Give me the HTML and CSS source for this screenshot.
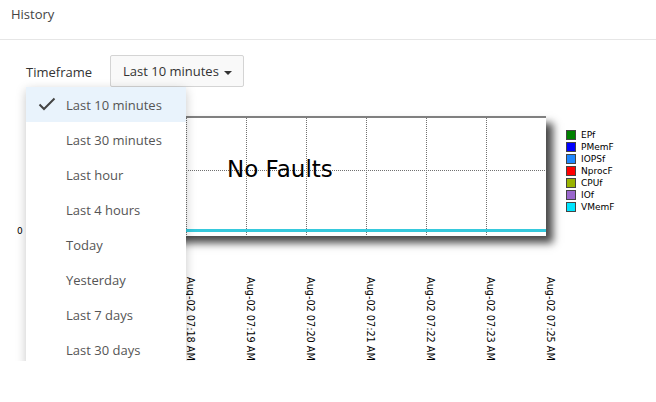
FILE: index.html
```html
<!DOCTYPE html>
<html>
<head>
<meta charset="utf-8">
<link rel="stylesheet" href="styles.css">
</head>
<body>
<div class="header">History</div>
<div class="toolbar">
  <span class="tf-label">Timeframe</span>
  <button class="tf-btn">Last 10 minutes <span class="caret"></span></button>
  <ul class="menu">
    <li class="item active"><svg class="check" width="18" height="14" viewBox="0 0 18 14"><path d="M1.5 7.5 L6 12 L16.5 1.5" fill="none" stroke="#444" stroke-width="2"/></svg>Last 10 minutes</li>
    <li class="item">Last 30 minutes</li>
    <li class="item">Last hour</li>
    <li class="item">Last 4 hours</li>
    <li class="item">Today</li>
    <li class="item">Yesterday</li>
    <li class="item">Last 7 days</li>
    <li class="item">Last 30 days</li>
  </ul>
</div>
<div class="chart">
  <div class="yaxis"><span class="ytick">0</span></div>
  <div class="plot-col">
    <div class="plot">
      <svg width="516" height="120" viewBox="0 0 516 120">
        <rect x="0" y="0" width="516" height="2" fill="#808080"/>
        <g stroke="#707070" stroke-width="1" stroke-dasharray="1 1">
          <line x1="0" y1="54.5" x2="516" y2="54.5"/>
          <line x1="36.5" y1="2" x2="36.5" y2="120"/>
          <line x1="96.5" y1="2" x2="96.5" y2="120"/>
          <line x1="156.5" y1="2" x2="156.5" y2="120"/>
          <line x1="216.5" y1="2" x2="216.5" y2="120"/>
          <line x1="276.5" y1="2" x2="276.5" y2="120"/>
          <line x1="336.5" y1="2" x2="336.5" y2="120"/>
          <line x1="396.5" y1="2" x2="396.5" y2="120"/>
          <line x1="456.5" y1="2" x2="456.5" y2="120"/>
        </g>
        <rect x="0" y="113" width="516" height="3" fill="#36c9dc"/>
      </svg>
      <div class="nofaults">No Faults</div>
    </div>
    <div class="xlabels">
      <span class="xl">Aug-02 07:18 AM</span>
      <span class="xl">Aug-02 07:19 AM</span>
      <span class="xl">Aug-02 07:20 AM</span>
      <span class="xl">Aug-02 07:21 AM</span>
      <span class="xl">Aug-02 07:22 AM</span>
      <span class="xl">Aug-02 07:23 AM</span>
      <span class="xl">Aug-02 07:25 AM</span>
    </div>
  </div>
  <ul class="legend">
    <li><span class="sw sw-epf"></span>EPf</li>
    <li><span class="sw sw-pmem"></span>PMemF</li>
    <li><span class="sw sw-iops"></span>IOPSf</li>
    <li><span class="sw sw-nproc"></span>NprocF</li>
    <li><span class="sw sw-cpu"></span>CPUf</li>
    <li><span class="sw sw-io"></span>IOf</li>
    <li><span class="sw sw-vmem"></span>VMemF</li>
  </ul>
</div>
</body>
</html>
```
FILE: styles.css
```css
* { box-sizing: border-box; }
body {
  margin: 0;
  background: #fff;
  font-family: "Open Sans", "DejaVu Sans", sans-serif;
  font-size: 13px;
  color: #333;
}
.header {
  height: 40px;
  padding: 5px 0 0 11px;
  line-height: 18px;
  border-bottom: 1px solid #e6e6e6;
  color: #444;
}
.toolbar {
  position: relative;
  display: flex;
  align-items: center;
  margin-top: 15px;
  padding-left: 26px;
  height: 32px;
}
.tf-label {
  width: 84px;
  color: #333;
  padding-top: 2px;
}
.tf-btn {
  height: 32px;
  width: 134px;
  padding: 0 0 0 12px;
  text-align: left;
  font-family: inherit;
  font-size: 13px;
  color: #333;
  background: #f9f9f9;
  border: 1px solid #d4d4d4;
  border-radius: 2px;
}
.caret {
  display: inline-block;
  width: 0;
  height: 0;
  margin-left: 2px;
  vertical-align: middle;
  border-top: 4px solid #333;
  border-left: 4px solid transparent;
  border-right: 4px solid transparent;
}
.menu {
  position: absolute;
  top: 32px;
  left: 26px;
  width: 160px;
  margin: 0;
  padding: 0;
  list-style: none;
  background: #fff;
  box-shadow: 0 3px 10px rgba(0, 0, 0, 0.22);
  z-index: 10;
}
.item {
  display: flex;
  align-items: center;
  height: 35px;
  padding-left: 40px;
  color: #555;
}
.item.active {
  background: #e9f3fc;
  padding-left: 12px;
}
.check { margin-right: 10px; margin-top: -1px; }
.chart {
  display: flex;
  margin-top: 29px;
}
.yaxis {
  width: 30px;
  height: 120px;
  display: flex;
  align-items: flex-end;
  padding: 0 0 0 17px;
}
.ytick {
  font-family: "DejaVu Sans", sans-serif;
  font-size: 9px;
  color: #000;
  line-height: 10px;
  margin-bottom: 0px;
}
.plot-col { width: 516px; }
.plot {
  position: relative;
  height: 120px;
  background: #fff;
  box-shadow: 7px 7px 8px rgba(0, 0, 0, 0.72);
}
.plot svg { display: block; }
.nofaults {
  position: absolute;
  left: 197px;
  top: 40px;
  font-family: "DejaVu Sans", sans-serif;
  font-size: 23px;
  color: #000;
}
.xlabels {
  display: grid;
  grid-template-columns: repeat(7, 60px);
  padding-left: 156px;
  margin-top: 41px;
}
.xl {
  justify-self: start;
  writing-mode: vertical-rl;
  font-family: "DejaVu Sans", sans-serif;
  font-size: 9.7px;
  line-height: 8px;
  color: #000;
  white-space: nowrap;
}
.legend {
  list-style: none;
  margin: 13px 0 0 20px;
  padding: 0;
  font-family: "DejaVu Sans", sans-serif;
  font-size: 9px;
  color: #000;
}
.legend li {
  display: flex;
  align-items: center;
  height: 12px;
}
.sw {
  width: 10px;
  height: 10px;
  border: 1px solid #444;
  margin-right: 5px;
}
.sw-epf { background: #008000; }
.sw-pmem { background: #0000ff; }
.sw-iops { background: #1e88ff; }
.sw-nproc { background: #ff0000; }
.sw-cpu { background: #99b300; }
.sw-io { background: #9966cc; }
.sw-vmem { background: #00e5ff; }
```
